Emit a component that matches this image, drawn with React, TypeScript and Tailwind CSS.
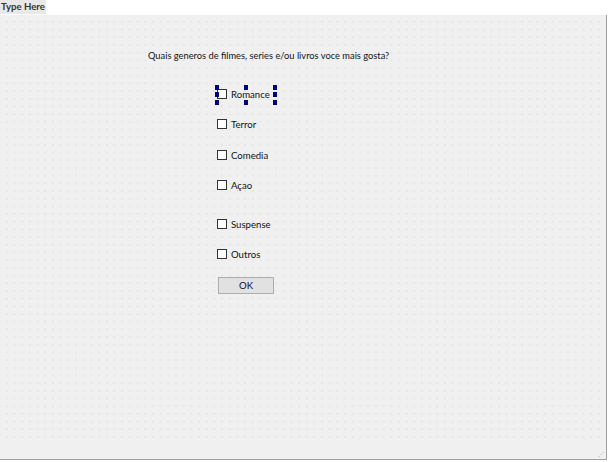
import React from "react";

const font = { fontFamily: 'Lato, "Noto Sans", sans-serif' };

function Check({ label, selected }: { label: string; selected?: boolean }) {
  return (
    <div className="relative flex items-center h-[14px]">
      <div className="w-[10px] h-[10px] border border-[#333] bg-white" />
      <span className="ml-[4px] text-[9.6px] text-[#111] leading-none">{label}</span>
      {selected && (
        <>
          <div className="absolute left-[-2px] top-[-2px] w-[4px] h-[5px] bg-[#000080]" />
          <div className="absolute left-[-2px] top-[5px] w-[4px] h-[5px] bg-[#000080]" />
          <div className="absolute left-[-2px] top-[13px] w-[4px] h-[5px] bg-[#000080]" />
          <div className="absolute left-[27px] top-[-2px] w-[4px] h-[5px] bg-[#000080]" />
          <div className="absolute left-[27px] top-[13px] w-[4px] h-[5px] bg-[#000080]" />
          <div className="absolute left-[56px] top-[-2px] w-[4px] h-[5px] bg-[#000080]" />
          <div className="absolute left-[56px] top-[5px] w-[4px] h-[5px] bg-[#000080]" />
          <div className="absolute left-[56px] top-[13px] w-[4px] h-[5px] bg-[#000080]" />
        </>
      )}
    </div>
  );
}

export default function App() {
  return (
    <div className="w-[609px] h-[462px] bg-white flex flex-col overflow-hidden" style={font}>
      <div className="h-[15px] flex items-start shrink-0">
        <div className="h-[14px] w-[46px] pl-[1px] bg-[#e8e8e8] text-[9.6px] font-bold text-[#333] leading-[14px]">
          Type Here
        </div>
      </div>
      <div className="flex-1 flex flex-col border-r border-[#a0a0a0] border-b mr-[2px] mb-[2px] bg-[#f0f0f0]">
        <div className="flex-1 bg-[radial-gradient(circle,#a8a8a8_0.55px,transparent_0.7px)] bg-[length:7.7px_7.7px] bg-[position:3px_3px] relative">
          <div className="pl-[148px] pt-[36px] text-[9.3px] text-[#111] leading-none">
            Quais generos de filmes, series e/ou livros voce mais gosta?
          </div>
          <div className="pl-[217px] pt-[27px] flex flex-col">
            <Check label="Romance" selected />
            <div className="h-[16px]" />
            <Check label="Terror" />
            <div className="h-[17px]" />
            <Check label="Comedia" />
            <div className="h-[16px]" />
            <Check label="Açao" />
            <div className="h-[25px]" />
            <Check label="Suspense" />
            <div className="h-[16px]" />
            <Check label="Outros" />
            <div className="h-[16px]" />
            <div className="w-[56px] h-[17px] bg-[#e1e1e1] border border-[#adadad] flex items-center justify-center text-[9.6px] text-[#111] leading-none ml-[1px]">
              OK
            </div>
          </div>
        </div>
        <div className="h-[18px] relative">
          <div className="absolute right-[2px] bottom-[2px] text-[6px] text-[#999] leading-none">⋰</div>
        </div>
      </div>
    </div>
  );
}
